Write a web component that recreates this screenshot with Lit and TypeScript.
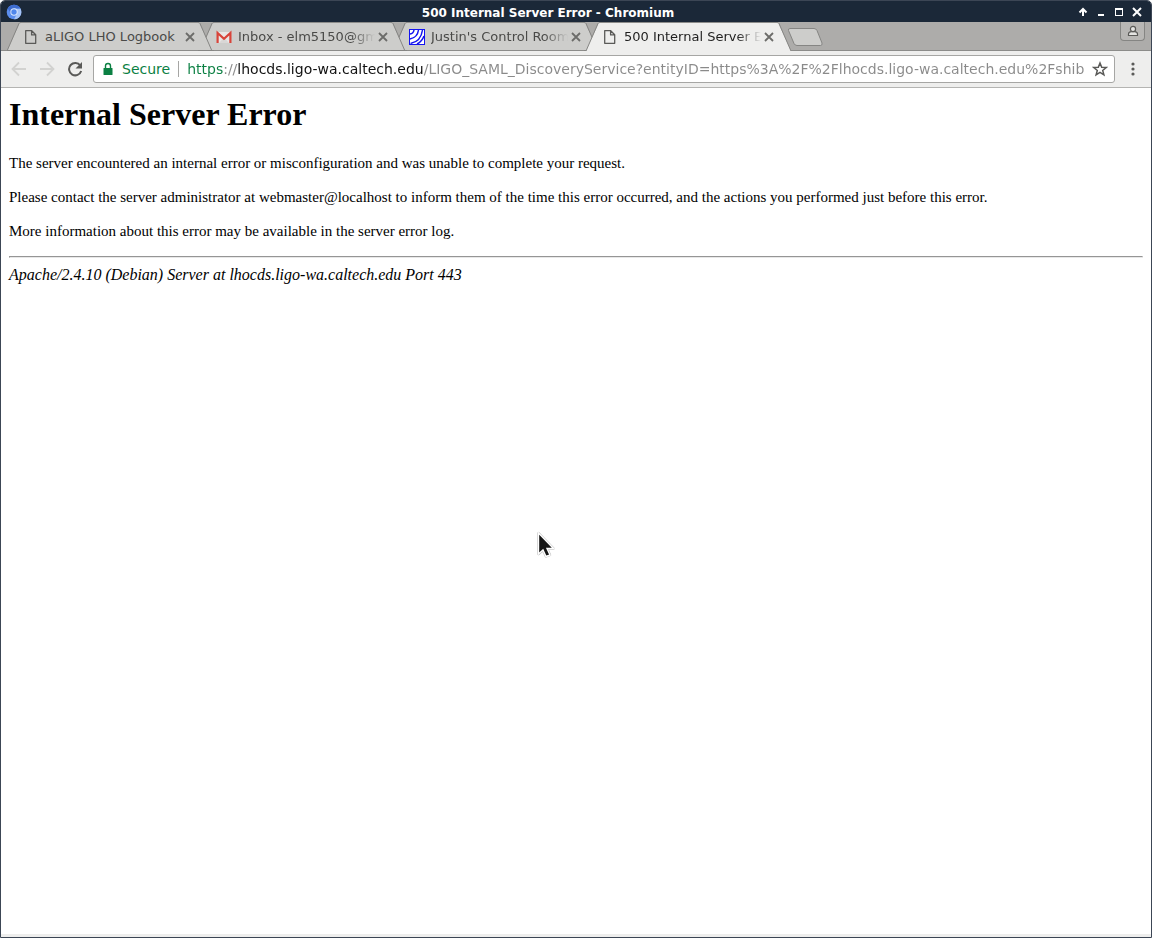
import { LitElement, html, svg, css } from "lit";
import { customElement, property, query, state } from "lit/decorators.js";

type Favicon = "page" | "mail" | "waves";

const pageIcon = svg`
  <svg width="16" height="16" viewBox="0 0 16 16" fill="none" stroke="#5a5a58" stroke-width="1.3" stroke-linejoin="round">
    <path d="M2.700 1.700h6l4 4v8.600h-10z M8.600 1.900v4h4" />
  </svg>`;

const mailIcon = svg`
  <svg width="16" height="16" viewBox="0 0 16 16">
    <path d="M1.500 3h13v11h-13z" fill="#e9e7e6" />
    <path d="M3 14l5-5.500 5 5.500z" fill="#d9d7d6" />
    <path d="M1.600 14V4l6.400 5.800L14.400 4v10" fill="none" stroke="#d8443a" stroke-width="2.200" />
  </svg>`;

const wavesIcon = svg`
  <svg width="16" height="16" viewBox="0 0 16 16">
    <rect x=".5" y=".5" width="15" height="15" fill="#fff" stroke="#1414f0" />
    <g fill="none" stroke="#1414f0" stroke-width="1.500">
      <path d="M1 5Q4.500 4.500 5 1" />
      <path d="M1 10Q8.500 8.500 9.500 1" />
      <path d="M1.500 14.500Q12 12.500 13.500 1" />
      <path d="M8 15Q13 12.500 15 7" />
    </g>
  </svg>`;

const favicons = { page: pageIcon, mail: mailIcon, waves: wavesIcon };

@customElement("browser-tab")
export class BrowserTab extends LitElement {
  @property() label = "";
  @property() icon: Favicon = "page";
  @property({ type: Boolean, reflect: true }) active = false;
  @state() private clipped = false;
  @query(".label") private labelEl!: HTMLElement;

  static styles = css`
    :host {
      display: grid;
      height: 29px;
      color: #4a4a48;
      --fill: #cdcdcb;
    }
    :host([active]) {
      color: #1e1e1e;
      --fill: #eeeeed;
    }
    .shape {
      grid-area: 1 / 1;
      display: flex;
      min-width: 0;
    }
    .edge {
      flex: none;
    }
    .middle {
      flex: 1;
      background: var(--fill);
      border-top: 1px solid #8c8c8a;
      border-bottom: 1px solid #8c8c8a;
    }
    :host([active]) .middle {
      border-bottom-color: var(--fill);
    }
    .fill {
      fill: var(--fill);
    }
    .line {
      fill: none;
      stroke: #858583;
    }
    .content {
      grid-area: 1 / 1;
      z-index: 1;
      display: flex;
      align-items: center;
      min-width: 0;
      padding: 0 14px 0 16px;
    }
    .open {
      display: flex;
      align-items: center;
      gap: 6px;
      flex: 1;
      min-width: 0;
      padding: 0;
      border: 0;
      background: none;
      color: inherit;
      font: 13px/18px "DejaVu Sans", sans-serif;
    }
    .open svg {
      flex: none;
    }
    .label {
      flex: 1;
      overflow: hidden;
      white-space: nowrap;
      text-align: left;
    }
    .label.clipped {
      mask-image: linear-gradient(to right, #000 calc(100% - 24px), transparent);
    }
    .close {
      display: grid;
      place-items: center;
      width: 16px;
      height: 16px;
      padding: 0;
      border: 0;
      background: none;
    }
  `;

  updated() {
    this.clipped = this.labelEl.scrollWidth > this.labelEl.clientWidth;
  }

  render() {
    return html`
      <div class="shape">
        <svg class="edge" width="14" height="29" viewBox="0 0 14 29">
          <path class="fill" d="M0 29L12.500 1.500Q13 .5 14 .5V29z" />
          <path class="line" d="M0 29L12 1.500Q12.500 .5 14 .5" />
          ${this.active ? "" : svg`<path class="line" d="M0 28.500H14" />`}
        </svg>
        <div class="middle"></div>
        <svg class="edge" width="14" height="29" viewBox="0 0 14 29">
          <path class="fill" d="M14 29L1.500 1.500Q1 .5 0 .5V29z" />
          <path class="line" d="M14 29L2 1.500Q1.500 .5 0 .5" />
          ${this.active ? "" : svg`<path class="line" d="M0 28.500H14" />`}
        </svg>
      </div>
      <div class="content">
        <button class="open">
          ${favicons[this.icon]}
          <span class="label ${this.clipped ? "clipped" : ""}">${this.label}</span>
        </button>
        <button class="close" aria-label="Close tab">
          <svg width="10" height="10" viewBox="0 0 10 10" stroke="#6c6c6a" stroke-width="1.800">
            <path d="M1 1l8 8M9 1l-8 8" />
          </svg>
        </button>
      </div>
    `;
  }
}

@customElement("app-root")
export class AppRoot extends LitElement {
  private tabs: { label: string; icon: Favicon; active?: boolean }[] = [
    { label: "aLIGO LHO Logbook", icon: "page" },
    { label: "Inbox - elm5150@gmail.com", icon: "mail" },
    { label: "Justin's Control Room", icon: "waves" },
    { label: "500 Internal Server Error", icon: "page", active: true },
  ];

  private url =
    "https://lhocds.ligo-wa.caltech.edu/LIGO_SAML_DiscoveryService?entityID=https%3A%2F%2Flhocds.ligo-wa.caltech.edu%2Fshibbo";

  static styles = css`
    :host {
      display: flex;
      flex-direction: column;
      box-sizing: border-box;
      min-height: 100vh;
      border: 1px solid #3c4655;
      border-radius: 5px 5px 0 0;
      overflow: hidden;
      background: #fff;
      color: #000;
    }
    button {
      display: grid;
      place-items: center;
      padding: 0;
      border: 0;
      background: none;
    }
    .titlebar {
      display: flex;
      align-items: center;
      height: 21px;
      padding: 0 5px;
      background: #1b2838;
      color: #fff;
    }
    .title {
      flex: 1;
      text-align: center;
      padding-top: 2px;
      font: bold 12px/18px "DejaVu Sans", sans-serif;
    }
    .controls {
      display: flex;
    }
    .controls button {
      width: 18px;
      height: 18px;
    }
    .strip {
      display: flex;
      height: 29px;
      padding-left: 6px;
      background: linear-gradient(#8c8c8a, #8c8c8a) bottom / 100% 1px no-repeat, #adacaa;
    }
    browser-tab {
      flex: 0 1 205px;
      min-width: 0;
      margin-right: -12px;
      position: relative;
    }
    .new {
      align-self: center;
      margin-left: 8px;
    }
    .profile {
      width: 25px;
      height: 19px;
      margin: 0 6px 0 auto;
      border: 1px solid #858583;
      border-top: 0;
      border-radius: 0 0 4px 4px;
      background: #b8b7b5;
    }
    .toolbar {
      display: flex;
      align-items: center;
      height: 36px;
      padding: 0 4px;
      background: #eeeeed;
      border-bottom: 1px solid #b4b4b2;
    }
    .toolbar > button {
      width: 28px;
      height: 28px;
    }
    .omnibox {
      flex: 1;
      display: flex;
      align-items: center;
      height: 26px;
      margin: 0 4px;
      padding: 0 6px 0 8px;
      border: 1px solid #a6a6a4;
      border-radius: 3px;
      background: #fff;
      font: 14px/20px "DejaVu Sans", sans-serif;
    }
    .secure {
      display: flex;
      align-items: center;
      gap: 8px;
      padding-right: 8px;
      border-right: 1px solid #a6a6a4;
      color: #0b8043;
      height: 16px;
    }
    .url {
      flex: 1;
      min-width: 0;
      height: 20px;
      margin: 0 8px;
      padding: 0;
      border: 0;
      outline: 0;
      font: inherit;
      color: #8a8a8a;
      background: linear-gradient(to right, #0b8043 37px, #8a8a8a 37px 50px, #111 50px 236px, #8a8a8a 236px);
      background-clip: text;
      -webkit-background-clip: text;
      -webkit-text-fill-color: transparent;
    }
    main {
      flex: 1;
      position: relative;
      padding: 8px;
      font: 15px/18px "Liberation Serif", serif;
    }
    h1 {
      margin: 0 0 21px;
      font: bold 32px/37px "Liberation Serif", serif;
    }
    p {
      margin: 0 0 16px;
    }
    hr {
      margin: 0 0 8px;
      border: 1px solid;
      border-color: #959595 #e8e8e8 #e8e8e8 #959595;
    }
    address {
      font-size: 16px;
    }
    .pointer {
      position: absolute;
      left: 534px;
      top: 443px;
    }
    footer {
      height: 3px;
      background: #eeeeed;
    }
  `;

  render() {
    return html`
      <header class="titlebar">
        <svg width="16" height="16" viewBox="0 0 16 16">
          <circle cx="8" cy="8" r="7.300" fill="#5c8eee" />
          <path d="M8 4.500h6.500A7.300 7.300 0 0 1 8 15.300l3-5.500z" fill="#a6c4f8" />
          <path d="M1.700 4.500A7.300 7.300 0 0 1 14.500 4.500H8L5 9.500z" fill="#3d6cd0" />
          <circle cx="8" cy="8" r="3.700" fill="#dce8fc" />
          <circle cx="8" cy="8" r="2.700" fill="#4f86ec" />
        </svg>
        <div class="title">500 Internal Server Error - Chromium</div>
        <div class="controls">
          <button aria-label="Keep above">
            <svg width="10" height="10" viewBox="0 0 10 10" fill="none" stroke="#fff" stroke-width="2"><path d="M5 9V2M1.500 5.500L5 2l3.500 3.500" /></svg>
          </button>
          <button aria-label="Minimize">
            <svg width="10" height="10" viewBox="0 0 10 10"><path d="M2 7h6v2H2z" fill="#fff" /></svg>
          </button>
          <button aria-label="Maximize">
            <svg width="10" height="10" viewBox="0 0 10 10" fill="#fff"><path fill-rule="evenodd" d="M1 1h8v8H1zM2 3v5h6V3z" /></svg>
          </button>
          <button aria-label="Close">
            <svg width="10" height="10" viewBox="0 0 10 10" stroke="#fff" stroke-width="2"><path d="M1 1l8 8M9 1L1 9" /></svg>
          </button>
        </div>
      </header>

      <nav class="strip">
        ${this.tabs.map(
          (t, i) => html`<browser-tab
            .label=${t.label}
            .icon=${t.icon}
            ?active=${t.active}
            style="z-index:${t.active ? 9 : 8 - i}"
          ></browser-tab>`
        )}
        <button class="new" aria-label="New tab">
          <svg width="36" height="18" viewBox="0 0 36 18">
            <path d="M3 .5h24q2 0 3 2l5 12.500q.5 2.500-1.500 2.500H10q-2 0-3-2L1.500 2.500Q1 .5 3 .5z" fill="#cdcdcb" stroke="#858583" />
          </svg>
        </button>
        <button class="profile" aria-label="Profile">
          <svg width="12" height="12" viewBox="0 0 12 12" fill="#e4e4e2" stroke="#5a5a58" stroke-width="1.200">
            <path d="M1.500 10.500V9q0-2 3-2.300h3q3 .3 3 2.300v1.500z" />
            <circle cx="6" cy="4" r="2.600" />
          </svg>
        </button>
      </nav>

      <div class="toolbar">
        <button aria-label="Back">
          <svg width="16" height="16" viewBox="0 0 16 16" fill="none" stroke="#d2d2d0" stroke-width="1.800"><path d="M15 8H2M8 1.500L1.500 8 8 14.500" /></svg>
        </button>
        <button aria-label="Forward">
          <svg width="16" height="16" viewBox="0 0 16 16" fill="none" stroke="#d2d2d0" stroke-width="1.800"><path d="M1 8h13M8 1.500L14.500 8 8 14.500" /></svg>
        </button>
        <button aria-label="Reload">
          <svg width="16" height="16" viewBox="0 0 16 16"><path d="M13.300 4.500A6.200 6.200 0 1 0 14.200 10" fill="none" stroke="#5a5a58" stroke-width="2" /><path d="M15 1v6.500H8.500z" fill="#5a5a58" /></svg>
        </button>
        <div class="omnibox">
          <span class="secure">
            <svg width="12" height="14" viewBox="0 0 12 14"><path d="M2 6h8q.5 0 .5.5v6q0 .5-.5.5H2q-.5 0-.5-.5v-6Q1.500 6 2 6z" fill="#0b8043" /><path d="M3.500 6V4a2.500 2.500 0 0 1 5 0v2" fill="none" stroke="#0b8043" stroke-width="1.400" /></svg>
            <span>Secure</span>
          </span>
          <input class="url" type="text" aria-label="Address" .value=${this.url} />
          <button aria-label="Bookmark this page">
            <svg width="16" height="16" viewBox="0 0 16 16" fill="none" stroke="#5a5a58" stroke-width="1.500"><path d="M8 2l1.700 4.200 4.500.3-3.500 2.900 1.200 4.400L8 11.400l-3.900 2.400 1.200-4.400L1.800 6.500l4.500-.3z" /></svg>
          </button>
        </div>
        <button aria-label="Menu">
          <svg width="4" height="14" viewBox="0 0 4 14" fill="#5a5a58"><circle cx="2" cy="2" r="1.600" /><circle cx="2" cy="7" r="1.600" /><circle cx="2" cy="12" r="1.600" /></svg>
        </button>
      </div>

      <main>
        <h1>Internal Server Error</h1>
        <p>The server encountered an internal error or misconfiguration and was unable to complete your request.</p>
        <p>Please contact the server administrator at webmaster@localhost to inform them of the time this error occurred, and the actions you performed just before this error.</p>
        <p>More information about this error may be available in the server error log.</p>
        <hr />
        <address>Apache/2.4.10 (Debian) Server at lhocds.ligo-wa.caltech.edu Port 443</address>
        <svg class="pointer" width="20" height="28" viewBox="0 0 20 28">
          <path d="M3.500 2v21l4.500-4 3 6.500 4-1.500-3-6.500h6.500z" fill="#161616" stroke="#bbb" stroke-width="2.400" stroke-linejoin="round" />
          <path d="M3.500 2v21l4.500-4 3 6.500 4-1.500-3-6.500h6.500z" fill="#161616" stroke="#fff" stroke-width="1.400" />
        </svg>
      </main>
      <footer></footer>
    `;
  }
}
